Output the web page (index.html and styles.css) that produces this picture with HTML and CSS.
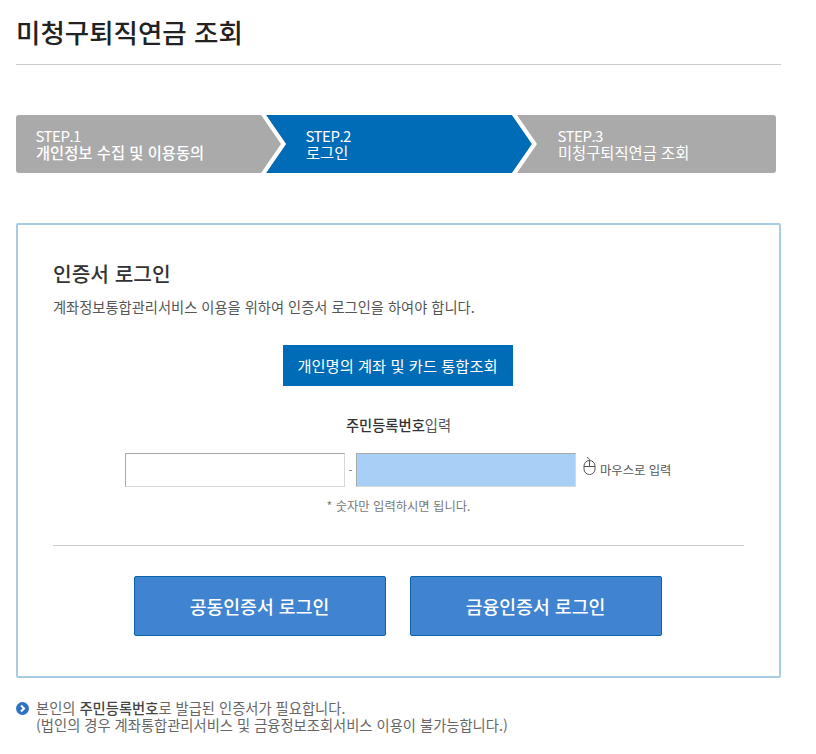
FILE: index.html
```html
<!DOCTYPE html>
<html lang="ko">
<head>
<meta charset="utf-8">
<title>미청구퇴직연금 조회</title>
<link rel="stylesheet" href="styles.css">
</head>
<body>
<main class="page">
  <h1 class="title">미청구퇴직연금 조회</h1>
  <ol class="steps">
    <svg class="steps-art" width="760" height="58" viewBox="0 0 760 58" aria-hidden="true">
      <polygon points="250,0 496,0 516,29 496,58 250,58 270,29" fill="#006cb7"/>
      <polygon points="245,0 250,0 270,29 250,58 245,58 265,29" fill="#fff"/>
      <polygon points="496,0 501,0 521,29 501,58 496,58 516,29" fill="#fff"/>
    </svg>
    <li class="step step-one"><span class="step-no">STEP.1</span><b>개인정보 수집 및 이용동의</b></li>
    <li class="step step-two"><span class="step-no">STEP.2</span><span>로그인</span></li>
    <li class="step step-three"><span class="step-no">STEP.3</span><span>미청구퇴직연금 조회</span></li>
  </ol>
  <section class="card">
    <h2 class="card-title">인증서 로그인</h2>
    <p class="card-desc">계좌정보통합관리서비스 이용을 위하여 인증서 로그인을 하여야 합니다.</p>
    <div class="center"><button class="btn-primary" type="button">개인명의 계좌 및 카드 통합조회</button></div>
    <p class="id-label"><b>주민등록번호</b>입력</p>
    <div class="id-row">
      <input class="id-input" type="text" aria-label="주민등록번호 앞자리">
      <span class="dash">-</span>
      <input class="id-input id-back" type="text" aria-label="주민등록번호 뒷자리">
      <span class="mouse">
        <svg width="13" height="18" viewBox="0 0 13 18" aria-hidden="true" fill="none" stroke="#555" stroke-width="1">
          <rect x="1" y="3.5" width="11" height="14" rx="5.5"/>
          <path d="M1 9.5H12M6.5 3.5V9.5M6.5 3.5C6.5 1.5 5.5 1 4 0.5"/>
        </svg>
        마우스로 입력
      </span>
    </div>
    <p class="hint">* 숫자만 입력하시면 됩니다.</p>
    <hr class="rule">
    <div class="actions">
      <button class="btn-login" type="button">공동인증서 로그인</button>
      <button class="btn-login" type="button">금융인증서 로그인</button>
    </div>
  </section>
  <div class="note">
    <svg class="note-icon" width="13" height="13" viewBox="0 0 13 13" aria-hidden="true">
      <circle cx="6.5" cy="6.5" r="6.5" fill="#2f72c4"/>
      <path d="M5 3.5L8 6.5L5 9.5" fill="none" stroke="#fff" stroke-width="2"/>
    </svg>
    <p>본인의 <b>주민등록번호</b>로 발급된 인증서가 필요합니다.<br>(법인의 경우 계좌통합관리서비스 및 금융정보조회서비스 이용이 불가능합니다.)</p>
  </div>
</main>
</body>
</html>
```
FILE: styles.css
```css
* { box-sizing: border-box; }
html, body { margin: 0; padding: 0; background: #fff; }
body {
  font-family: "Noto Sans CJK KR", "Noto Sans", sans-serif;
  color: #333;
  overflow: hidden;
}
.page { width: 765px; margin-left: 16px; }
.title {
  margin: 0;
  height: 65px;
  padding-top: 13px;
  border-bottom: 1px solid #ccc;
  font-size: 26.5px;
  line-height: 38px;
  font-weight: 500;
  color: #222;
}
.steps {
  position: relative;
  display: flex;
  width: 760px;
  height: 58px;
  margin: 50px 0 0;
  padding: 0;
  list-style: none;
  background: #aaa;
  border-radius: 3px;
  overflow: hidden;
}
.steps-art { position: absolute; left: 0; top: 0; }
.step {
  position: relative;
  display: flex;
  flex-direction: column;
  justify-content: center;
  color: #fff;
  font-size: 15.35px;
  line-height: 17px;
}
.step b { font-weight: 500; }
.step-no { font-size: 15px; letter-spacing: -0.5px; margin: -1px 0 0 -0.5px; }
.step-one { width: 270px; padding-left: 20px; }
.step-two { width: 252px; padding-left: 20px; }
.step-three { padding-left: 20px; }
.card {
  height: 455px;
  margin-top: 50px;
  padding: 0 35px;
  border: 2px solid #a8cce4;
  border-radius: 2px;
}
.card-title {
  margin: 33px 0 0;
  font-size: 20.3px;
  line-height: 30px;
  font-weight: 500;
  color: #333;
}
.card-desc {
  margin: 9px 0 0;
  font-size: 14.27px;
  line-height: 20px;
  color: #555;
}
.center { display: flex; justify-content: center; margin: 28px 2px 0 0; }
.btn-primary {
  width: 230px;
  height: 41px;
  padding: 0 0 2px;
  border: 0;
  background: #006cb7;
  color: #fff;
  font: inherit;
  font-size: 15.3px;
}
.id-label {
  margin: 29px 0 0;
  text-align: center;
  font-size: 14.3px;
  line-height: 20px;
  color: #555;
}
.id-label b { font-weight: 500; color: #333; }
.id-row {
  display: flex;
  align-items: center;
  height: 34px;
  margin: 18px 0 0 72px;
}
.id-input {
  width: 220px;
  height: 34px;
  padding: 0;
  border: 1px solid #d8d8d8;
  border-top-color: #a9a9a9;
  border-left-color: #a9a9a9;
  background: #fff;
}
.id-back { background: #a8cff5; }
.dash { width: 11px; text-align: center; font-size: 11px; color: #666; }
.mouse {
  display: flex;
  align-items: center;
  gap: 4px;
  margin-left: 7px;
  font-size: 12.3px;
  color: #555;
  white-space: nowrap;
}
.mouse svg { margin-bottom: 8px; }
.hint {
  margin: 10px 0 0;
  text-align: center;
  font-size: 12.3px;
  line-height: 18px;
  color: #777;
}
.rule { margin: 30px 0 0; border: 0; border-top: 1px solid #ccc; }
.actions { display: flex; justify-content: center; gap: 24px; margin: 30px 2px 0 0; }
.btn-login {
  width: 252px;
  height: 60px;
  border: 1px solid #0a62a8;
  border-radius: 2px;
  background: #3f83d1;
  color: #fff;
  font: inherit;
  font-size: 18.3px;
  font-weight: 500;
}
.note { display: flex; gap: 7px; margin-top: 21px; }
.note-icon { flex: none; margin-top: 3px; }
.note p {
  margin: 0;
  font-size: 14.3px;
  line-height: 17px;
  color: #666;
}
.note b { font-weight: 500; color: #444; }
```
